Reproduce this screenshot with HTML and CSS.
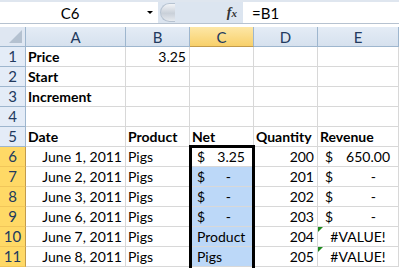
FILE: index.html
```html
<!DOCTYPE html>
<html lang="en">
<head>
    <meta charset="UTF-8">
    <title>Sheet</title>
    <link rel="stylesheet" href="styles.css">
</head>
<body>
    <div class="formula-bar">
        <div class="name-box"><span class="name">C6</span><span class="arrow"></span></div>
        <div class="fx-area">
            <span class="knob"></span>
            <span class="fx"><i>f</i><i class="fx-x">x</i></span>
        </div>
        <div class="formula-input">=B1</div>
    </div>

    <div class="sheet">
        <div class="corner"><span class="corner-tri"></span></div>
        <div class="col-head">A</div>
        <div class="col-head">B</div>
        <div class="col-head active">C</div>
        <div class="col-head">D</div>
        <div class="col-head">E</div>

        <div class="row-head">1</div>
        <div class="cell bold">Price</div>
        <div class="cell right">3.25</div>
        <div class="cell"></div>
        <div class="cell"></div>
        <div class="cell"></div>

        <div class="row-head">2</div>
        <div class="cell bold">Start</div>
        <div class="cell"></div>
        <div class="cell"></div>
        <div class="cell"></div>
        <div class="cell"></div>

        <div class="row-head">3</div>
        <div class="cell bold">Increment</div>
        <div class="cell"></div>
        <div class="cell"></div>
        <div class="cell"></div>
        <div class="cell"></div>

        <div class="row-head">4</div>
        <div class="cell"></div>
        <div class="cell"></div>
        <div class="cell"></div>
        <div class="cell"></div>
        <div class="cell"></div>

        <div class="row-head">5</div>
        <div class="cell bold">Date</div>
        <div class="cell bold">Product</div>
        <div class="cell bold">Net</div>
        <div class="cell bold">Quantity</div>
        <div class="cell bold">Revenue</div>

        <div class="row-head active">6</div>
        <div class="cell right">June 1, 2011</div>
        <div class="cell">Pigs</div>
        <div class="cell acct"><span>$</span><span>3.25</span></div>
        <div class="cell right">200</div>
        <div class="cell acct"><span>$</span><span>650.00</span></div>

        <div class="row-head active">7</div>
        <div class="cell right">June 2, 2011</div>
        <div class="cell">Pigs</div>
        <div class="cell acct sel"><span>$</span><span class="dash">-</span></div>
        <div class="cell right">201</div>
        <div class="cell acct"><span>$</span><span class="dash">-</span></div>

        <div class="row-head active">8</div>
        <div class="cell right">June 3, 2011</div>
        <div class="cell">Pigs</div>
        <div class="cell acct sel"><span>$</span><span class="dash">-</span></div>
        <div class="cell right">202</div>
        <div class="cell acct"><span>$</span><span class="dash">-</span></div>

        <div class="row-head active">9</div>
        <div class="cell right">June 6, 2011</div>
        <div class="cell">Pigs</div>
        <div class="cell acct sel"><span>$</span><span class="dash">-</span></div>
        <div class="cell right">203</div>
        <div class="cell acct"><span>$</span><span class="dash">-</span></div>

        <div class="row-head active">10</div>
        <div class="cell right">June 7, 2011</div>
        <div class="cell">Pigs</div>
        <div class="cell text sel">Product</div>
        <div class="cell right">204</div>
        <div class="cell center error">#VALUE!</div>

        <div class="row-head active">11</div>
        <div class="cell right">June 8, 2011</div>
        <div class="cell">Pigs</div>
        <div class="cell text sel">Pigs</div>
        <div class="cell right">205</div>
        <div class="cell center error">#VALUE!</div>

        <div class="selection"></div>
    </div>
</body>
</html>
```

FILE: styles.css
```css
/* Base */
body {
    margin: 0;
    width: 399px;
    height: 268px;
    overflow: hidden;
    background: #fff;
    font-family: Lato, "Liberation Sans", sans-serif;
    font-size: 14px;
    color: #000;
}

/* Formula bar */
.formula-bar {
    display: flex;
    height: 21px;
    padding: 2px 0 0 0;
    background: #dfe6ef;
    border-bottom: 1px solid #b6c2d0;
    margin-bottom: 3px;
}
.name-box {
    width: 158px;
    background: #fff;
    display: flex;
    align-items: center;
}
.name-box .name {
    width: 140px;
    text-align: center;
    padding-top: 1px;
    font-size: 15px;
}
.name-box .arrow {
    margin-left: 7px;
    border-left: 3px solid transparent;
    border-right: 3px solid transparent;
    border-top: 3px solid #000;
}
.fx-area {
    width: 85px;
    display: flex;
    align-items: center;
    background: #dce5f0;
}
.knob {
    width: 14px;
    height: 17px;
    margin-left: 2px;
    border: 1px solid #b7c3d1;
    border-right: none;
    border-radius: 10px 0 0 10px;
    background: linear-gradient(#f2f4f7, #c9d0d9 55%, #e6eaef);
}
.fx {
    margin-left: auto;
    margin-right: 6px;
    font-family: "Liberation Serif", serif;
    font-weight: bold;
    font-size: 14px;
    color: #333;
}
.fx .fx-x {
    font-size: 11px;
}
.formula-input {
    flex: 1;
    background: #fff;
    padding: 1px 0 0 9px;
    display: flex;
    align-items: center;
    font-size: 15px;
}

/* Sheet grid */
.sheet {
    display: grid;
    grid-template-columns: 26px 100px 64px 64px 64px 81px;
    grid-auto-rows: 20px;
    position: relative;
}
.corner {
    background: #dfe7f2;
    border-right: 1px solid #9eb6ce;
    border-bottom: 1px solid #9eb6ce;
    position: relative;
}
.corner-tri {
    position: absolute;
    right: 3px;
    bottom: 3px;
    border-left: 13px solid transparent;
    border-bottom: 13px solid #b4c1d0;
}
.col-head {
    background: linear-gradient(#e4ecf6, #d6e1ee);
    border-right: 1px solid #9eb6ce;
    border-bottom: 1px solid #9eb6ce;
    color: #223a5e;
    font-size: 15px;
    display: flex;
    align-items: center;
    justify-content: center;
}
.col-head.active {
    background: linear-gradient(#fde7a7, #f8d06a);
    border-bottom-color: #c29b4c;
}
.row-head {
    background: #e4ecf7;
    border-right: 1px solid #9eb6ce;
    border-bottom: 1px solid #9eb6ce;
    color: #223a5e;
    font-size: 15px;
    display: flex;
    align-items: flex-end;
    justify-content: center;
    padding-bottom: 1px;
}
.row-head.active {
    background: #ffd966;
    border-right-color: #c29b4c;
    border-bottom-color: #f1c65a;
}
.cell {
    border-right: 1px solid #d8d8d8;
    border-bottom: 1px solid #d8d8d8;
    display: flex;
    align-items: flex-end;
    padding: 0 2px 1px 2px;
    white-space: nowrap;
    position: relative;
}
.cell.bold {
    font-weight: bold;
}
.cell.right {
    justify-content: flex-end;
    padding-right: 3px;
}
.cell.center {
    justify-content: center;
}
.cell.acct {
    justify-content: space-between;
    padding: 0 8px 1px 7px;
}
.cell.acct .dash {
    padding-right: 14px;
}
.cell.text {
    padding-left: 7px;
}
.cell.sel {
    background: #bcd8f8;
}
.cell.error::before {
    content: "";
    position: absolute;
    left: 0;
    top: 0;
    border-top: 5px solid #1d8a1d;
    border-right: 5px solid transparent;
}
/* selection continues below the visible rows */
.selection {
    position: absolute;
    grid-column: 4 / 5;
    grid-row: 7 / 13;
    top: -2px;
    left: -1px;
    right: -1px;
    bottom: -12px;
    border: 3px solid #000;
    pointer-events: none;
}
```
